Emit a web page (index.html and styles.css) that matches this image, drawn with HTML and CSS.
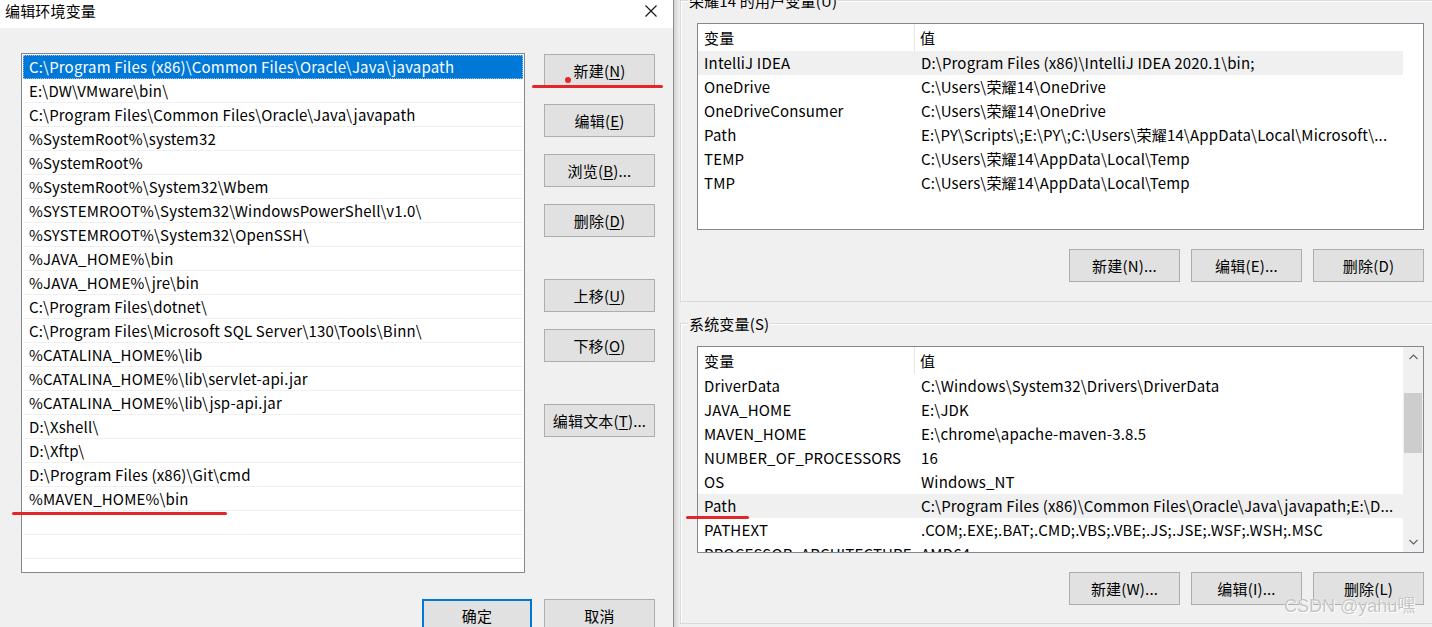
FILE: index.html
```html
<!DOCTYPE html>
<html lang="zh-CN">
<head>
<meta charset="utf-8">
<title>编辑环境变量</title>
<link rel="stylesheet" href="styles.css">
</head>
<body>
<div class="screen">
  <section class="edit-dialog">
    <header class="titlebar">
      <span class="title">编辑环境变量</span>
      <svg class="close" width="12" height="12" viewBox="0 0 12 12"><path d="M0.5 0.5L11.5 11.5M11.5 0.5L0.5 11.5" stroke="#111" stroke-width="1.1" fill="none"/></svg>
    </header>
    <div class="edit-body">
      <ul class="path-list">
        <li class="sel">C:\Program Files (x86)\Common Files\Oracle\Java\javapath</li>
        <li>E:\DW\VMware\bin\</li>
        <li>C:\Program Files\Common Files\Oracle\Java\javapath</li>
        <li>%SystemRoot%\system32</li>
        <li>%SystemRoot%</li>
        <li>%SystemRoot%\System32\Wbem</li>
        <li>%SYSTEMROOT%\System32\WindowsPowerShell\v1.0\</li>
        <li>%SYSTEMROOT%\System32\OpenSSH\</li>
        <li>%JAVA_HOME%\bin</li>
        <li>%JAVA_HOME%\jre\bin</li>
        <li>C:\Program Files\dotnet\</li>
        <li>C:\Program Files\Microsoft SQL Server\130\Tools\Binn\</li>
        <li>%CATALINA_HOME%\lib</li>
        <li>%CATALINA_HOME%\lib\servlet-api.jar</li>
        <li>%CATALINA_HOME%\lib\jsp-api.jar</li>
        <li>D:\Xshell\</li>
        <li>D:\Xftp\</li>
        <li>D:\Program Files (x86)\Git\cmd</li>
        <li>%MAVEN_HOME%\bin</li>
        <li></li>
        <li></li>
        <li></li>
      </ul>
      <div class="side-buttons">
        <button class="btn">新建(<u>N</u>)</button>
        <button class="btn">编辑(<u>E</u>)</button>
        <button class="btn">浏览(<u>B</u>)...</button>
        <button class="btn wide-gap">删除(<u>D</u>)</button>
        <button class="btn">上移(<u>U</u>)</button>
        <button class="btn wide-gap">下移(<u>O</u>)</button>
        <button class="btn">编辑文本(<u>T</u>)...</button>
      </div>
    </div>
    <footer class="edit-footer">
      <button class="btn default">确定</button>
      <button class="btn">取消</button>
    </footer>
  </section>

  <section class="env-window">
    <div class="group user-group">
      <div class="group-label">荣耀14 的用户变量(U)</div>
      <div class="var-list">
        <div class="var-table">
          <div class="var-head"><div class="c1">变量</div><div class="c2">值</div></div>
          <div class="var-row hl"><div class="c1">IntelliJ IDEA</div><div class="c2">D:\Program Files (x86)\IntelliJ IDEA 2020.1\bin;</div></div>
          <div class="var-row"><div class="c1">OneDrive</div><div class="c2">C:\Users\荣耀14\OneDrive</div></div>
          <div class="var-row"><div class="c1">OneDriveConsumer</div><div class="c2">C:\Users\荣耀14\OneDrive</div></div>
          <div class="var-row"><div class="c1">Path</div><div class="c2">E:\PY\Scripts\;E:\PY\;C:\Users\荣耀14\AppData\Local\Microsoft\...</div></div>
          <div class="var-row"><div class="c1">TEMP</div><div class="c2">C:\Users\荣耀14\AppData\Local\Temp</div></div>
          <div class="var-row"><div class="c1">TMP</div><div class="c2">C:\Users\荣耀14\AppData\Local\Temp</div></div>
        </div>
      </div>
      <div class="btn-row">
        <button class="btn">新建(N)...</button>
        <button class="btn">编辑(E)...</button>
        <button class="btn">删除(D)</button>
      </div>
    </div>

    <div class="group sys-group">
      <div class="group-label">系统变量(S)</div>
      <div class="var-list">
        <div class="var-table">
          <div class="var-head"><div class="c1">变量</div><div class="c2">值</div></div>
          <div class="var-row"><div class="c1">DriverData</div><div class="c2">C:\Windows\System32\Drivers\DriverData</div></div>
          <div class="var-row"><div class="c1">JAVA_HOME</div><div class="c2">E:\JDK</div></div>
          <div class="var-row"><div class="c1">MAVEN_HOME</div><div class="c2">E:\chrome\apache-maven-3.8.5</div></div>
          <div class="var-row"><div class="c1">NUMBER_OF_PROCESSORS</div><div class="c2">16</div></div>
          <div class="var-row"><div class="c1">OS</div><div class="c2">Windows_NT</div></div>
          <div class="var-row hl"><div class="c1">Path</div><div class="c2">C:\Program Files (x86)\Common Files\Oracle\Java\javapath;E:\D...</div></div>
          <div class="var-row"><div class="c1">PATHEXT</div><div class="c2">.COM;.EXE;.BAT;.CMD;.VBS;.VBE;.JS;.JSE;.WSF;.WSH;.MSC</div></div>
          <div class="var-row"><div class="c1">PROCESSOR_ARCHITECTURE</div><div class="c2">AMD64</div></div>
        </div>
        <div class="scrollbar">
          <div class="arrow"><svg width="9" height="6" viewBox="0 0 9 6"><path d="M0.5 5L4.5 1L8.5 5" stroke="#606060" stroke-width="1.1" fill="none"/></svg></div>
          <div class="thumb"></div>
          <div class="arrow down"><svg width="9" height="6" viewBox="0 0 9 6"><path d="M0.5 1L4.5 5L8.5 1" stroke="#606060" stroke-width="1.1" fill="none"/></svg></div>
        </div>
      </div>
      <div class="btn-row">
        <button class="btn">新建(W)...</button>
        <button class="btn">编辑(I)...</button>
        <button class="btn">删除(L)</button>
      </div>
    </div>
  </section>

  <div class="mark line-new"></div>
  <div class="mark dot-new"></div>
  <div class="mark line-maven"></div>
  <div class="mark line-path"></div>
  <div class="watermark">CSDN @yahu嘿</div>
</div>
</body>
</html>
```

FILE: styles.css
```css
* {
  box-sizing: border-box;
  margin: 0;
  padding: 0;
}

html, body {
  width: 1432px;
  height: 627px;
  overflow: hidden;
}

body {
  background: #f0f0f0;
  font-family: "Noto Sans CJK SC", "Noto Sans", sans-serif;
  font-size: 15px;
  letter-spacing: 0.17px;
  color: #000;
}

.screen {
  position: relative;
  display: flex;
  width: 1432px;
  height: 627px;
  overflow: hidden;
}

/* ---------- left dialog ---------- */
.edit-dialog {
  flex: none;
  width: 674px;
  height: 627px;
  display: flex;
  flex-direction: column;
  background: #f0f0f0;
  border-right: 1px solid #8c8c8c;
}

.titlebar {
  height: 28px;
  flex: none;
  background: #fff;
  display: flex;
  justify-content: space-between;
  align-items: flex-start;
  padding: 0 16px 0 5px;
}

.title {
  line-height: 21px;
}

.close {
  margin-top: 5px;
}

.edit-body {
  display: flex;
  padding: 25px 0 0 21px;
}

.path-list {
  list-style: none;
  width: 504px;
  height: 520px;
  flex: none;
  background: #fff;
  border: 1px solid #828790;
  padding: 1px;
  overflow: hidden;
}

.path-list li {
  height: 24px;
  line-height: 23px;
  padding-left: 6px;
  border-bottom: 1px solid #f0f0f0;
  white-space: nowrap;
}

.path-list li.sel {
  background: #0078d7;
  color: #fff;
  border-bottom-color: #0078d7;
  outline: 1px dotted #9fc6ea;
  outline-offset: -1px;
}

.side-buttons {
  display: flex;
  flex-direction: column;
  margin: 1px 0 0 19px;
}

.btn {
  width: 111px;
  height: 33px;
  flex: none;
  display: flex;
  align-items: center;
  justify-content: center;
  background: #e1e1e1;
  border: 1px solid #adadad;
  font-family: inherit;
  font-size: 15px;
  letter-spacing: 0.17px;
  color: #000;
  padding-bottom: 1px;
}

.side-buttons .btn {
  margin-bottom: 17px;
}

.side-buttons .btn.wide-gap {
  margin-bottom: 42px;
}

.btn u {
  text-decoration: underline;
  text-underline-offset: 2px;
}

.edit-footer {
  display: flex;
  justify-content: flex-end;
  gap: 12px;
  margin-top: 26px;
  padding-right: 18px;
}

.btn.default {
  width: 110px;
  border: 2px solid #0078d7;
}

/* ---------- right window ---------- */
.env-window {
  flex: 1;
  height: 627px;
  padding-left: 6px;
  background: linear-gradient(to right, #d2d2d2 0, #e2e2e2 3px, #ececec 5px, #f0f0f0 6px);
}

.group {
  border: 1px solid #d9d9d9;
  border-right: none;
  box-shadow: inset 1px 1px 0 #fff;
  padding: 0 0 19px 16px;
}

.sys-group {
  margin-top: 21px;
  padding-bottom: 18px;
}

.group-label {
  width: fit-content;
  margin: -10px 0 0 -9px;
  padding: 0 1px;
  line-height: 20px;
  background: #f0f0f0;
}

.var-list {
  margin-top: 12px;
  width: 727px;
  height: 207px;
  display: flex;
  background: #fff;
  border: 1px solid #828790;
  overflow: hidden;
}

.var-table {
  width: 705px;
  flex: none;
}

.var-head {
  display: flex;
  height: 27px;
  line-height: 27px;
}

.var-head .c1 {
  width: 217px;
  padding-left: 6px;
  border-right: 1px solid #e5e5e5;
}

.var-head .c2 {
  padding-left: 5px;
}

.var-row {
  display: flex;
  height: 24px;
  line-height: 24px;
  white-space: nowrap;
}

.var-row.hl {
  background: #f0f0f0;
}

.var-row .c1 {
  width: 217px;
  flex: none;
  padding-left: 6px;
  overflow: hidden;
}

.var-row .c2 {
  flex: 1;
  padding-left: 6px;
  overflow: hidden;
}

.scrollbar {
  width: 20px;
  flex: none;
  display: flex;
  flex-direction: column;
  align-items: stretch;
  background: #f0f0f0;
}

.arrow {
  height: 20px;
  display: flex;
  align-items: center;
  justify-content: center;
}

.arrow.down {
  margin-top: auto;
}

.thumb {
  height: 60px;
  margin: 26px 1px 0 1px;
  background: #cdcdcd;
}

.btn-row {
  display: flex;
  justify-content: flex-end;
  gap: 11px;
  width: 727px;
  margin-top: 19px;
}

/* ---------- overlays ---------- */
.mark {
  position: absolute;
  background: #e3262a;
  border-radius: 2px;
}

.line-new {
  left: 532px;
  top: 85px;
  width: 131px;
  height: 3px;
}

.dot-new {
  left: 565px;
  top: 77px;
  width: 6px;
  height: 6px;
  border-radius: 50%;
}

.line-maven {
  left: 12px;
  top: 512px;
  width: 215px;
  height: 3px;
}

.line-path {
  left: 686px;
  top: 516px;
  width: 63px;
  height: 3px;
}

.watermark {
  position: absolute;
  left: 1284px;
  top: 595px;
  font-family: "Liberation Sans", "Noto Sans CJK SC", sans-serif;
  font-size: 18px;
  line-height: 22px;
  letter-spacing: 0;
  color: #c4c4c4;
  text-shadow: 0 0 1px #fff, 1px 1px 0 #fff;
}
```
